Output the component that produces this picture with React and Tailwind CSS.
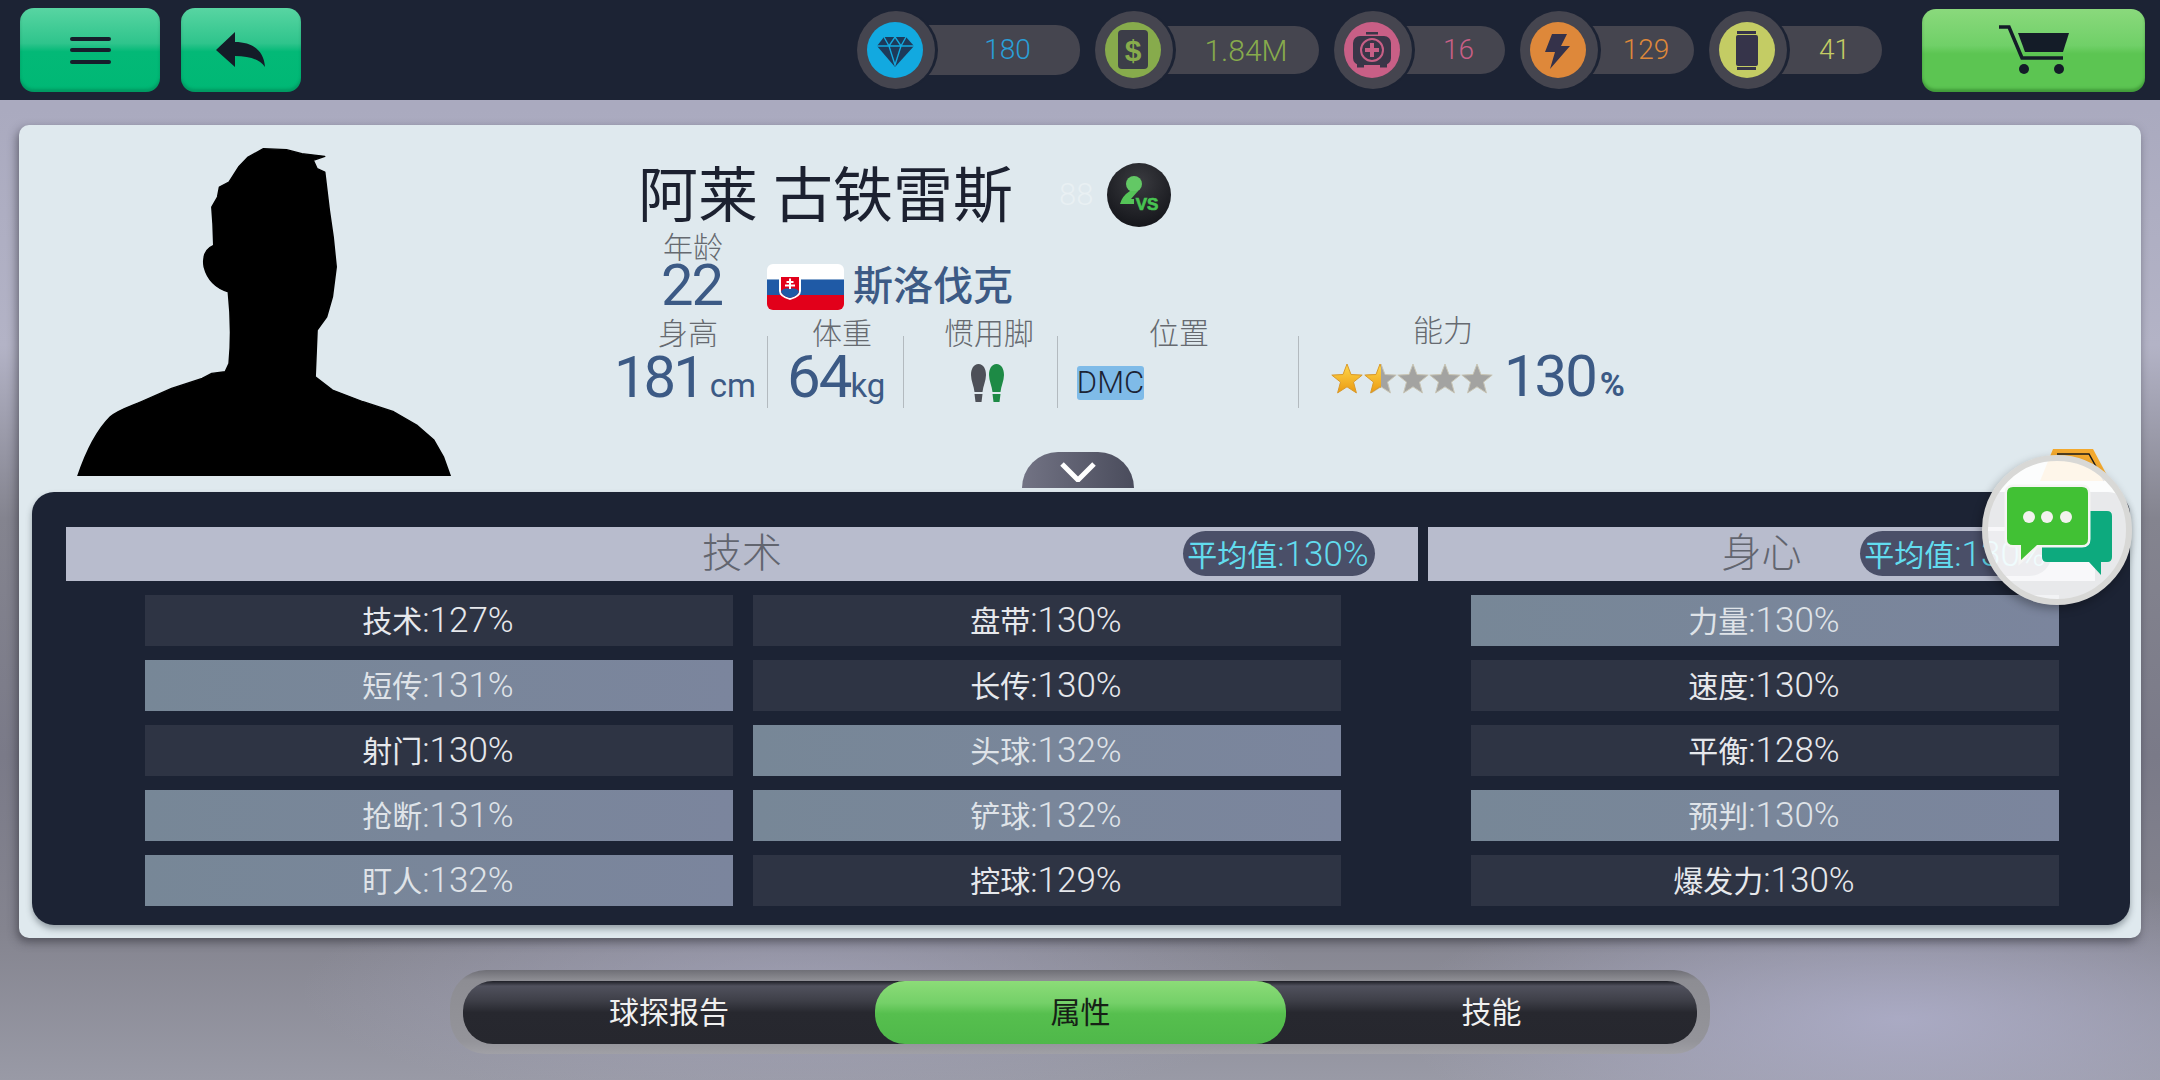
import React from "react";

const Res = ({ pill, h = "h-[48px]", tone, text, children }) => (
  <div className="flex items-center">
    <div className="relative z-10 flex h-[78px] w-[78px] shrink-0 items-center justify-center rounded-full bg-[#45454f] pr-[2px] shadow-[3px_0_0_#1c2334]">
      {children}
    </div>
    <div className={`-ml-[24px] flex ${h} ${pill} items-center justify-center rounded-r-[24px] bg-[#45454f] pl-[24px] text-[28px] font-light ${tone}`}>
      {text}
    </div>
  </div>
);

const Circle = ({ bg, children }) => (
  <svg width="56" height="56" viewBox="0 0 56 56">
    <circle cx="28" cy="28" r="28" fill={bg} />
    {children}
  </svg>
);

const Split = ({ text }) => {
  const i = text.indexOf(":");
  return (
    <>
      <span className="text-[30px] font-normal">{text.slice(0, i)}</span>
      <span className="text-[35px] font-light">{text.slice(i)}</span>
    </>
  );
};

const Row = ({ on, text }) => (
  <div
    className={`flex h-[51px] w-[588px] items-center justify-center pr-[2px] leading-none ${
      on ? "bg-[linear-gradient(90deg,#778797,#7b859d)] text-[#dfe3e8]" : "bg-[#2e3444] text-[#e6e8ec]"
    }`}
  >
    <span><Split text={text} /></span>
  </div>
);

const Header = ({ title, className }) => (
  <div className={`relative flex h-[54px] items-center justify-center bg-[#b8bccd] text-[40px] font-light text-[#62656f] ${className}`}>
    {title}
    <div className="absolute right-[43px] top-[4px] flex h-[45px] w-[192px] items-center justify-center rounded-full bg-[#4a4f68] pb-[2px] pr-[2px] leading-none text-[#62dcee]">
      <span><Split text="平均值:130%" /></span>
    </div>
  </div>
);

const starPath = (cx) => {
  const pts = [];
  for (let i = 0; i < 10; i++) {
    const r = i % 2 === 0 ? 16 : 6.8;
    const a = (Math.PI / 5) * i - Math.PI / 2;
    pts.push(`${(cx + r * Math.cos(a)).toFixed(1)},${(16 + r * Math.sin(a)).toFixed(1)}`);
  }
  return pts.join(" ");
};

const Stars = () => (
  <svg className="mt-[17px] shrink-0" width="164" height="32" viewBox="0 0 164 32">
    <defs>
      <linearGradient id="gold" x1="0" y1="0" x2="0" y2="1">
        <stop offset="0" stopColor="#ffd84a" />
        <stop offset="1" stopColor="#eb9a12" />
      </linearGradient>
      <clipPath id="half">
        <rect x="30" y="0" width="21" height="32" />
      </clipPath>
    </defs>
    {[51, 83, 115, 147].map((c) => (
      <polygon key={c} points={starPath(c)} fill="#a3a3a1" stroke="#c9c5b4" strokeWidth="1" />
    ))}
    <polygon points={starPath(17)} fill="url(#gold)" stroke="#d99a2c" strokeWidth="1" />
    <polygon points={starPath(50)} fill="url(#gold)" stroke="#d99a2c" strokeWidth="1" clipPath="url(#half)" />
  </svg>
);

const Label = ({ className = "", children }) => (
  <div className={`h-[32px] text-[30px] font-light leading-[32px] text-[#666a70] ${className}`}>{children}</div>
);

const Divider = () => <div className="mt-[18px] h-[72px] w-px shrink-0 bg-[#b3babf]" />;

const greenBtn =
  "bg-[linear-gradient(180deg,#58d5a2_0%,#2fc48c_42%,#03b977_52%,#00b875_100%)] shadow-[inset_0_-3px_3px_rgba(0,60,40,0.25)]";

export default function App() {
  return (
    <div className="relative flex h-[1080px] w-[2160px] flex-col overflow-hidden bg-[radial-gradient(ellipse_500px_150px_at_1900px_1020px,rgba(176,176,205,0.8),transparent),radial-gradient(ellipse_500px_120px_at_800px_990px,rgba(170,170,195,0.6),transparent),linear-gradient(180deg,#aaaabf_0%,#aaaabf_10%,#b3b3c6_32%,#84848f_48%,#7a7a88_70%,#84848f_86%,#999aa6_100%)] font-['Roboto','Noto_Sans_CJK_SC',sans-serif]">
      {/* top bar */}
      <div className="flex h-[100px] shrink-0 items-center justify-between bg-[#1c2334] pb-[9px] pl-[20px] pr-[15px] pt-[9px]">
        <div className="flex gap-[21px]">
          <button className={`flex h-[84px] w-[140px] flex-col items-center justify-center gap-[7.5px] rounded-[14px] ${greenBtn}`}>
            <span className="h-[4px] w-[41px] rounded-full bg-[#161e2b]" />
            <span className="h-[4px] w-[41px] rounded-full bg-[#161e2b]" />
            <span className="h-[4px] w-[41px] rounded-full bg-[#161e2b]" />
          </button>
          <button className={`flex h-[84px] w-[120px] items-center justify-center rounded-[14px] ${greenBtn}`}>
            <svg width="50" height="36" viewBox="217 33 50 36">
              <path d="M217 51 L236 33 L236 43 C254 43 265 52 266 68 C260 60 250 57 236 57 L236 68 Z" fill="#141c28" />
            </svg>
          </button>
        </div>
        <div className="flex items-center gap-[15px]">
          <Res pill="w-[169px]" h="h-[50px]" tone="text-[#2a9fd8]" text="180">
            <Circle bg="#12a9e0">
              <path d="M17 15 L39 15 L47 24 L28 45 L10 24 Z" fill="#1d3a5a" />
              <path d="M10 24 H47 M17 15 L22 24 L28 15 L34 24 L39 15 M22 24 L28 43 L34 24" stroke="#12a9e0" strokeWidth="1.4" fill="none" />
            </Circle>
          </Res>
          <Res pill="w-[170px]" tone="text-[#87ab4c]" text={<span className="text-[30px]">1.84M</span>}>
            <Circle bg="#87ab4c">
              <rect x="13" y="8" width="30" height="39" rx="4" fill="#3c3d48" />
              <text x="28" y="39" textAnchor="middle" fontSize="30" fontWeight="700" fill="#87ab4c" fontFamily="Liberation Sans, sans-serif">$</text>
            </Circle>
          </Res>
          <Res pill="w-[117px]" tone="text-[#c85f86]" text="16">
            <Circle bg="#c85f86">
              <rect x="22" y="10" width="12" height="2.5" fill="#3a3648" />
              <rect x="9" y="14" width="38" height="29" rx="7" fill="#3a3648" />
              <rect x="13" y="42" width="7" height="3.5" fill="#3a3648" />
              <rect x="36" y="42" width="7" height="3.5" fill="#3a3648" />
              <circle cx="28" cy="28" r="11" fill="none" stroke="#c85f86" strokeWidth="2" />
              <path d="M28 21 V35 M21 28 H35" stroke="#c85f86" strokeWidth="4" />
            </Circle>
          </Res>
          <Res pill="w-[120px]" tone="text-[#de883a]" text="129">
            <Circle bg="#de883a">
              <polygon points="22,12 37,12 31,24 40,24 20,47 25,30 15,30" fill="#35324a" />
            </Circle>
          </Res>
          <Res pill="w-[119px]" tone="text-[#c4cc64]" text="41">
            <Circle bg="#c4cc64">
              <rect x="18" y="9" width="19" height="3" fill="#36344a" />
              <rect x="17" y="13" width="22" height="31" rx="2" fill="#36344a" />
              <rect x="18" y="45" width="19" height="3" fill="#36344a" />
            </Circle>
          </Res>
          <button className="ml-[25px] flex h-[83px] w-[223px] items-center justify-center rounded-[14px] bg-[linear-gradient(180deg,#8ad97c_0%,#70d068_44%,#5cc552_54%,#5cc552_100%)] shadow-[inset_0_-3px_3px_rgba(0,60,0,0.3)]">
            <svg width="76" height="54" viewBox="94 22 76 54">
              <path d="M97 26 H107 L120 57 H161" fill="none" stroke="#141c28" strokeWidth="3.5" />
              <polygon points="116,32 167,32 161,51 123,51" fill="#141c28" />
              <circle cx="122" cy="68" r="5" fill="#141c28" />
              <circle cx="157" cy="68" r="5" fill="#141c28" />
            </svg>
          </button>
        </div>
      </div>

      {/* main */}
      <div className="flex-1 px-[19px] pt-[25px]">
        <div className="flex h-[813px] w-[2122px] flex-col rounded-[10px] bg-[#dfe9ee] shadow-[-2px_4px_10px_rgba(40,40,50,0.55)]">
          <div className="relative flex h-[367px] shrink-0 items-start">
            <svg className="ml-[57px] mt-[22px] shrink-0 blur-[0.6px]" width="375" height="329" viewBox="200 110 980 988" preserveAspectRatio="none">
              <path
                d="M205,1098 C225,1030 255,960 290,920 C310,900 340,890 370,875 L450,835 L530,805 L555,790 L590,785 L600,760 C605,700 605,620 598,545 C570,535 545,515 535,470 C530,435 540,415 560,405 L558,340 L555,290 L570,260 L575,230 L600,215 L625,170 L650,140 L690,115 L750,118 L790,130 L850,138 L820,150 L830,175 L850,185 L862,300 L872,380 L880,470 L870,560 L855,620 L830,660 L825,800 L870,840 L950,875 L1030,905 L1090,945 L1135,990 L1160,1040 L1178,1098 Z"
                fill="#000"
                stroke="#000"
                strokeWidth="4"
                strokeLinejoin="round"
              />
            </svg>
            <div className="ml-[166px] mt-[38px] flex flex-col">
              {/* name */}
              <div className="flex h-[64px] items-center pl-[21px]">
                <div className="mt-[4px] w-[421px] text-[60px] font-normal leading-[64px] text-[#1c2130]">阿莱 古铁雷斯</div>
                <div className="w-[48px] text-[31px] font-light text-[#e9f0f3]">88</div>
                <svg width="64" height="64" viewBox="0 0 64 64">
                  <defs>
                    <radialGradient id="ball" cx="0.5" cy="0.3" r="0.8">
                      <stop offset="0" stopColor="#3a3b40" />
                      <stop offset="1" stopColor="#101116" />
                    </radialGradient>
                  </defs>
                  <circle cx="32" cy="32" r="32" fill="url(#ball)" />
                  <circle cx="27" cy="21" r="8" fill="#63c865" />
                  <path d="M23 28 H31 L24 36 H27 V41 H13 Q15 33 23 28 Z" fill="#55c458" />
                  <text x="40" y="47" textAnchor="middle" fontSize="17" fontWeight="700" fill="#48c452" stroke="#48c452" strokeWidth="0.7" fontFamily="Liberation Sans, sans-serif">VS</text>
                </svg>
              </div>
              {/* age and nation */}
              <div className="mt-[6px] flex h-[77px] items-start pl-[46px]">
                <div className="flex w-[61px] flex-col">
                  <div className="h-[30px] text-[30px] font-light leading-[30px] text-[#666a70]">年龄</div>
                  <div className="-ml-[2px] h-[44px] text-[58px] font-normal leading-[44px] tracking-[-2px] text-[#3c5a85]">22</div>
                </div>
                <svg className="ml-[43px] mt-[31px] shrink-0" width="77" height="46" viewBox="0 0 77 46">
                  <defs>
                    <clipPath id="flag">
                      <rect width="77" height="46" rx="6" />
                    </clipPath>
                  </defs>
                  <g clipPath="url(#flag)">
                    <rect width="77" height="15.5" fill="#fff" />
                    <rect y="15.5" width="77" height="15.5" fill="#1f5aa6" />
                    <rect y="31" width="77" height="15" fill="#e2001a" />
                  </g>
                  <path d="M12 11 H34 V27 Q34 33 23 36 Q12 33 12 27 Z" fill="#fff" />
                  <path d="M14 13 H32 V27 Q32 31.5 23 34 Q14 31.5 14 27 Z" fill="#e2001a" />
                  <path d="M14 27 Q18 23 23 25 Q28 23 32 27 Q32 31.5 23 34 Q14 31.5 14 27 Z" fill="#1f5aa6" />
                  <path d="M23 14.5 V25 M19.5 18 H26.5 M18 21.5 H28" stroke="#fff" strokeWidth="2" />
                </svg>
                <div className="ml-[9px] mt-[31px] text-[40px] font-medium leading-[46px] text-[#3c5a85]">斯洛伐克</div>
              </div>
              {/* stats */}
              <div className="mt-[8px] flex items-start text-[#3c5a85]">
                <div className="w-[150px] shrink-0">
                  <Label className="pl-[41px]">身高</Label>
                  <div className="-ml-[3px] flex h-[54px] items-baseline font-normal leading-[54px]">
                    <span className="text-[58px] tracking-[-3px]">181</span>
                    <span className="ml-[7px] text-[33px]">cm</span>
                  </div>
                </div>
                <Divider />
                <div className="w-[135px] shrink-0">
                  <Label className="pl-[44px]">体重</Label>
                  <div className="flex h-[54px] items-baseline pl-[19px] font-normal leading-[54px]">
                    <span className="text-[60px] tracking-[-2px]">64</span>
                    <span className="text-[33px]">kg</span>
                  </div>
                </div>
                <Divider />
                <div className="w-[153px] shrink-0">
                  <Label className="pl-[40px]">惯用脚</Label>
                  <svg className="ml-[66px] mt-[14px]" width="35" height="38" viewBox="0 0 35 38">
                    <path d="M8.5 0 C13.5 0 16 5 16 11 C16 17 13 22 12.5 28 H4.5 C4 22 1 17 1 11 C1 5 3.5 0 8.5 0 Z" fill="#4d5058" />
                    <path d="M4.5 30 H12.5 L11.5 38 H5.5 Z" fill="#4d5058" />
                    <path d="M26.5 0 C31.5 0 34 5 34 11 C34 17 31 22 30.5 28 H22.5 C22 22 19 17 19 11 C19 5 21.5 0 26.5 0 Z" fill="#1d8a45" />
                    <path d="M22.5 30 H30.5 L29.5 38 H23.5 Z" fill="#1d8a45" />
                  </svg>
                </div>
                <Divider />
                <div className="w-[240px] shrink-0">
                  <Label className="pl-[91px]">位置</Label>
                  <div className="ml-[19px] mt-[16px] flex h-[34px] w-[67px] items-center justify-center rounded-[3px] bg-[#7fbbe8] text-[31px] font-light text-[#1c2334]">
                    DMC
                  </div>
                </div>
                <Divider />
                <div className="shrink-0">
                  <Label className="-mt-[3px] pl-[114px]">能力</Label>
                  <div className="flex items-start pl-[31px]">
                    <Stars />
                    <div className="ml-[10px] flex h-[58px] items-baseline font-normal leading-[58px]">
                      <span className="text-[58px] tracking-[-2px]">130</span>
                      <span className="ml-[4px] text-[34px] font-bold">%</span>
                    </div>
                  </div>
                </div>
              </div>
            </div>
            <div className="absolute bottom-[4px] left-[1003px] flex h-[36px] w-[112px] items-start justify-center rounded-t-[44px] bg-[linear-gradient(90deg,#727384,#4a4c5c)]">
              <svg className="mt-[10px]" width="36" height="20" viewBox="0 0 36 20">
                <path d="M2 2 L18 18 L34 2" fill="none" stroke="#fff" strokeWidth="5" />
              </svg>
            </div>
          </div>

          {/* stats panel */}
          <div className="ml-[13px] mr-[11px] flex h-[433px] gap-[10px] rounded-[22px] bg-[#1c2334] pl-[34px] pt-[35px] shadow-[0_4px_6px_rgba(60,70,80,0.45)]">
            <div className="flex w-[1352px] flex-col gap-[14px]">
              <Header title="技术" />
              <div className="grid grid-cols-[588px_588px] gap-x-[20px] gap-y-[14px] pl-[79px]">
                <Row text="技术:127%" />
                <Row text="盘带:130%" />
                <Row on text="短传:131%" />
                <Row text="长传:130%" />
                <Row text="射门:130%" />
                <Row on text="头球:132%" />
                <Row on text="抢断:131%" />
                <Row on text="铲球:132%" />
                <Row on text="盯人:132%" />
                <Row text="控球:129%" />
              </div>
            </div>
            <div className="flex w-[667px] flex-col gap-[14px]">
              <Header title="身心" />
              <div className="flex flex-col gap-[14px] pl-[43px]">
                <Row on text="力量:130%" />
                <Row text="速度:130%" />
                <Row text="平衡:128%" />
                <Row on text="预判:130%" />
                <Row text="爆发力:130%" />
              </div>
            </div>
          </div>
        </div>

        {/* tabs */}
        <div className="mx-auto mt-[32px] flex h-[84px] w-[1260px] items-center justify-center rounded-[36px] bg-[linear-gradient(180deg,#6f6f76_0%,#8d8d93_12%,#94949a_85%,#a0a0a6_100%)]">
          <div className="flex h-[63px] w-[1234px] rounded-[30px] bg-[linear-gradient(180deg,#1e1f26_0%,#50515d_8%,#3f4049_30%,#27282f_50%,#26272e_100%)] text-[30px] font-normal">
            <div className="flex w-[412px] items-center justify-center text-[#f0f0f0]">球探报告</div>
            <div className="flex w-[411px] items-center justify-center rounded-[30px] bg-[linear-gradient(180deg,#8cdc78_0%,#74d068_35%,#56bf4e_52%,#4fb84a_100%)] text-[#162016]">属性</div>
            <div className="flex w-[411px] items-center justify-center text-[#f0f0f0]">技能</div>
          </div>
        </div>
      </div>

      {/* hexagon hint and chat bubble */}
      <svg className="absolute left-[2040px] top-[449px]" width="72" height="60" viewBox="0 0 72 60">
        <polygon points="13,0 53,0 70,32 0,32" fill="#f3a92e" />
        <path d="M17,5 H49 L64,32" fill="none" stroke="#1a1a1a" strokeWidth="1.5" />
      </svg>
      <div className="absolute left-[1982px] top-[455px] h-[150px] w-[150px] rounded-full border-[6px] border-[#d8d8d6] bg-white/90 shadow-[-2px_4px_10px_rgba(0,0,0,0.3)]">
        <svg className="absolute -left-[6px] -top-[6px]" width="150" height="150" viewBox="0 0 150 150">
          <path d="M65 56 H125 Q130 56 130 61 V102 Q130 107 125 107 H119 L119 120 L107 107 H65 Q60 107 60 102 V61 Q60 56 65 56 Z" fill="#0daa7e" />
          <path d="M31 32 H100 Q106 32 106 38 V84 Q106 90 100 90 H55 L39 105 V90 H31 Q25 90 25 84 V38 Q25 32 31 32 Z" fill="#41c134" stroke="#f5f5f3" strokeWidth="5" paintOrder="stroke" />
          <circle cx="47" cy="62" r="6" fill="#f2f2ee" />
          <circle cx="65" cy="62" r="6" fill="#f2f2ee" />
          <circle cx="84" cy="62" r="6" fill="#f2f2ee" />
        </svg>
      </div>
    </div>
  );
}
